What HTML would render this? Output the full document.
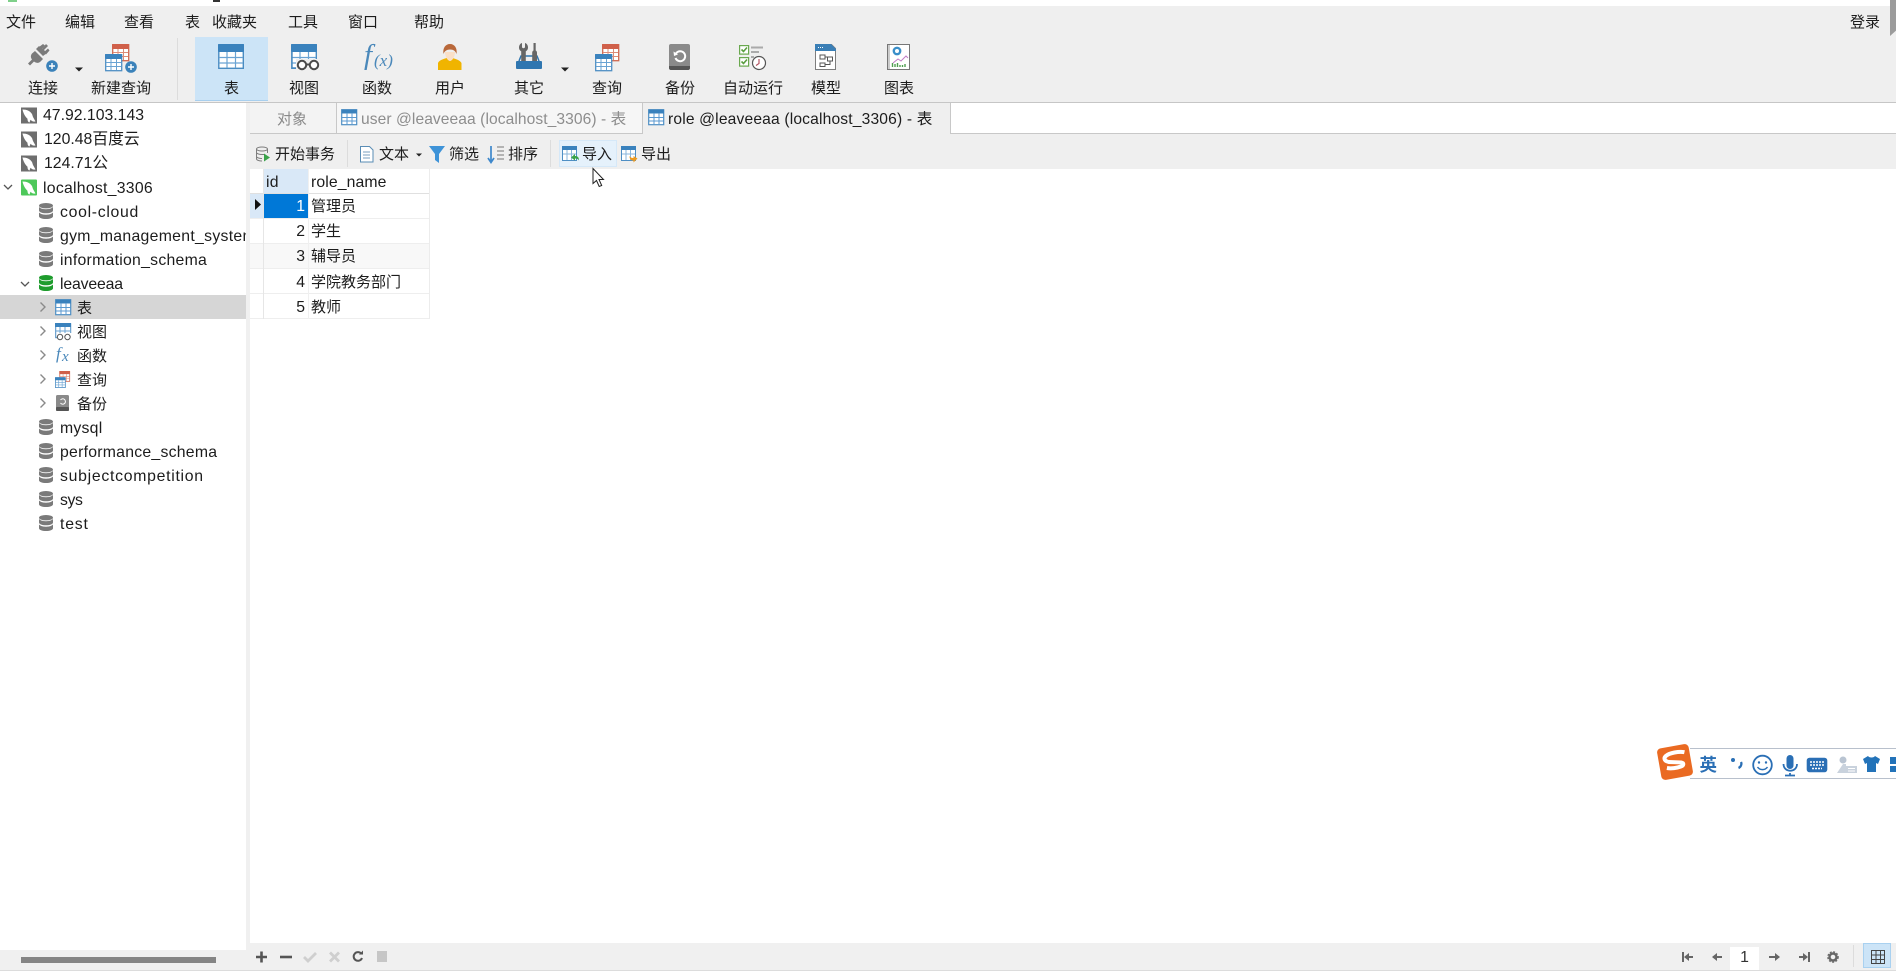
<!DOCTYPE html>
<html><head><meta charset="utf-8"><style>
*{box-sizing:border-box}
html,body{margin:0;padding:0;width:1896px;height:972px;overflow:hidden;background:#fff}
body{position:relative;font-family:"Liberation Sans","Noto Sans CJK SC",sans-serif;color:#1c1c1c}
.b{position:absolute}
.t{position:absolute;white-space:nowrap;line-height:20px;height:20px;font-size:15px;margin-top:1px}
.l{font-size:15.8px}
svg{position:absolute;left:0;top:0}
</style></head><body>
<div class="b" style="left:0;top:0;width:1896px;height:6px;background:#fff"></div>
<div class="b" style="left:8px;top:0;width:9px;height:2px;background:#7fd08a"></div>
<div class="b" style="left:213px;top:0;width:7px;height:2px;background:#333"></div>
<div class="b" style="left:0;top:6px;width:1896px;height:96px;background:#efefef"></div>
<div class="b" style="left:0;top:102px;width:1896px;height:1px;background:#c6c6c6"></div>
<div class="b" style="left:1890px;top:0;width:6px;height:36px;background:#9b9b9b;clip-path:polygon(0 0,100% 0,100% 85%,0 100%)"></div>
<div class="b" style="left:177px;top:38px;width:1px;height:62px;background:#dcdcdc"></div>
<div class="b" style="left:195px;top:37px;width:73px;height:64px;background:#cce4f7;border-bottom:1px solid #a8cfee"></div>

<!-- menu -->
<span class="t" style="left:6px;top:12px">文件</span>
<span class="t" style="left:65px;top:12px">编辑</span>
<span class="t" style="left:124px;top:12px">查看</span>
<span class="t" style="left:185px;top:12px">表</span>
<span class="t" style="left:212px;top:12px">收藏夹</span>
<span class="t" style="left:288px;top:12px">工具</span>
<span class="t" style="left:348px;top:12px">窗口</span>
<span class="t" style="left:414px;top:12px">帮助</span>
<span class="t" style="left:1850px;top:12px">登录</span>

<!-- toolbar labels -->
<span class="t" style="left:28px;top:78px">连接</span>
<span class="t" style="left:91px;top:78px">新建查询</span>
<span class="t" style="left:224px;top:78px">表</span>
<span class="t" style="left:289px;top:78px">视图</span>
<span class="t" style="left:362px;top:78px">函数</span>
<span class="t" style="left:435px;top:78px">用户</span>
<span class="t" style="left:514px;top:78px">其它</span>
<span class="t" style="left:592px;top:78px">查询</span>
<span class="t" style="left:665px;top:78px">备份</span>
<span class="t" style="left:723px;top:78px">自动运行</span>
<span class="t" style="left:811px;top:78px">模型</span>
<span class="t" style="left:884px;top:78px">图表</span>

<!-- sidebar -->
<div class="b" style="left:246px;top:103px;width:4px;height:847px;background:#f0f0f0"></div>
<div class="b" style="left:0;top:295px;width:246px;height:24px;background:#d6d6d6"></div>
<span class="t l" style="left:43px;top:105px">47.92.103.143</span>
<span class="t l" style="left:44px;top:129px">120.48百度云</span>
<span class="t l" style="left:44px;top:153px">124.71公</span>
<span class="t l" style="left:43px;top:178px;letter-spacing:.26px">localhost_3306</span>
<span class="t l" style="left:60px;top:202px;letter-spacing:.7px">cool-cloud</span>
<div class="b" style="left:60px;top:225px;width:186px;height:23px;overflow:hidden"><span class="t l" style="left:0;top:1px;letter-spacing:.3px">gym_management_system</span></div>
<span class="t l" style="left:60px;top:250px;letter-spacing:.27px">information_schema</span>
<span class="t l" style="left:60px;top:274px;letter-spacing:-.15px">leaveeaa</span>
<span class="t" style="left:77px;top:298px">表</span>
<span class="t" style="left:77px;top:322px">视图</span>
<span class="t" style="left:77px;top:346px">函数</span>
<span class="t" style="left:77px;top:370px">查询</span>
<span class="t" style="left:77px;top:394px">备份</span>
<span class="t l" style="left:60px;top:418px;letter-spacing:.24px">mysql</span>
<span class="t l" style="left:60px;top:442px;letter-spacing:.25px">performance_schema</span>
<span class="t l" style="left:60px;top:466px;letter-spacing:.72px">subjectcompetition</span>
<span class="t l" style="left:60px;top:490px;letter-spacing:-.4px">sys</span>
<span class="t l" style="left:60px;top:514px;letter-spacing:.8px">test</span>

<!-- tabs -->
<div class="b" style="left:250px;top:103px;width:87px;height:30px;background:#f3f3f3;border-right:1px solid #c8c8c8"></div>
<div class="b" style="left:337px;top:103px;width:306px;height:30px;background:#f6f6f6;border-right:1px solid #c8c8c8"></div>
<div class="b" style="left:643px;top:103px;width:308px;height:31px;background:#efefef;border-right:1px solid #c8c8c8"></div>
<div class="b" style="left:250px;top:133px;width:393px;height:1px;background:#c8c8c8"></div>
<div class="b" style="left:951px;top:133px;width:945px;height:1px;background:#c8c8c8"></div>
<span class="t" style="left:277px;top:109px;color:#8a8a8a">对象</span>
<span class="t" style="left:361px;top:109px;color:#8d8d8d;font-size:15.6px;letter-spacing:.07px">user @leaveeaa (localhost_3306) - 表</span>
<span class="t" style="left:668px;top:109px;font-size:15.6px;letter-spacing:.17px">role @leaveeaa (localhost_3306) - 表</span>

<!-- toolbar 2 -->
<div class="b" style="left:250px;top:134px;width:1646px;height:35px;background:#efefef"></div>
<div class="b" style="left:347px;top:140px;width:1px;height:27px;background:#dcdcdc"></div>
<div class="b" style="left:550px;top:140px;width:1px;height:27px;background:#dcdcdc"></div>
<div class="b" style="left:559px;top:140px;width:58px;height:27px;background:#e5f1fb;border:1px solid #d5e8f8"></div>
<span class="t" style="left:275px;top:144px">开始事务</span>
<span class="t" style="left:379px;top:144px">文本</span>
<span class="t" style="left:449px;top:144px">筛选</span>
<span class="t" style="left:508px;top:144px">排序</span>
<span class="t" style="left:582px;top:144px">导入</span>
<span class="t" style="left:641px;top:144px">导出</span>

<!-- table -->
<div class="b" style="left:264px;top:169px;width:45px;height:24px;background:#d9e8f7"></div>
<div class="b" style="left:250px;top:193px;width:14px;height:25px;background:#d9e8f7"></div>
<div class="b" style="left:264px;top:193px;width:45px;height:25px;background:#0078d7"></div>
<div class="b" style="left:309px;top:193px;width:120px;height:25px;background:#fff"></div>
<div class="b" style="left:250px;top:243px;width:179px;height:25px;background:#f8f8f8"></div>
<div class="b" style="left:250px;top:193px;width:179px;height:1px;background:#e0e0e0"></div>
<div class="b" style="left:250px;top:218px;width:179px;height:1px;background:#eee"></div>
<div class="b" style="left:250px;top:243px;width:179px;height:1px;background:#eee"></div>
<div class="b" style="left:250px;top:268px;width:179px;height:1px;background:#eee"></div>
<div class="b" style="left:250px;top:293px;width:179px;height:1px;background:#eee"></div>
<div class="b" style="left:250px;top:318px;width:179px;height:1px;background:#eee"></div>
<div class="b" style="left:263px;top:169px;width:1px;height:150px;background:#e6e6e6"></div>
<div class="b" style="left:308px;top:169px;width:1px;height:150px;background:#f0f0f0"></div>
<div class="b" style="left:429px;top:169px;width:1px;height:150px;background:#ececec"></div>
<span class="t l" style="left:266px;top:172px;letter-spacing:.3px">id</span>
<span class="t l" style="left:311px;top:172px;letter-spacing:.1px">role_name</span>
<span class="t l" style="left:264px;width:41px;text-align:right;top:196px;color:#fff">1</span>
<span class="t l" style="left:264px;width:41px;text-align:right;top:221px">2</span>
<span class="t l" style="left:264px;width:41px;text-align:right;top:246px">3</span>
<span class="t l" style="left:264px;width:41px;text-align:right;top:272px">4</span>
<span class="t l" style="left:264px;width:41px;text-align:right;top:297px">5</span>
<span class="t" style="left:311px;top:196px">管理员</span>
<span class="t" style="left:311px;top:221px">学生</span>
<span class="t" style="left:311px;top:246px">辅导员</span>
<span class="t" style="left:311px;top:272px">学院教务部门</span>
<span class="t" style="left:311px;top:297px">教师</span>

<!-- status -->
<div class="b" style="left:250px;top:943px;width:1646px;height:27px;background:#f0f0f0"></div>
<div class="b" style="left:0;top:950px;width:250px;height:20px;background:#f0f0f0"></div>
<div class="b" style="left:21px;top:957px;width:195px;height:6px;background:#858585"></div>
<div class="b" style="left:0;top:970px;width:1896px;height:1px;background:#dcdcdc"></div>
<div class="b" style="left:1730px;top:947px;width:29px;height:23px;background:#fff"></div>
<span class="t l" style="left:1730px;width:29px;text-align:center;top:947px;color:#333">1</span>
<div class="b" style="left:1853px;top:945px;width:1px;height:22px;background:#dcdcdc"></div>
<div class="b" style="left:1863px;top:943px;width:28px;height:25px;background:#cce4f7;border:1px solid #a9d1f0"></div>

<!-- sogou -->
<div class="b" style="left:1690px;top:748px;width:206px;height:31px;background:#fff;border-top:1px solid #b8c0cc;border-bottom:1px solid #b8c0cc"></div>
<span class="t" style="left:1699.500px;top:754px;font-size:17.500px;font-weight:bold;color:#2a6fb5">英</span>

<svg width="1896" height="972" viewBox="0 0 1896 972">
<defs>
<g id="tb"><rect x=".7" y=".7" width="15" height="15" fill="#fff" stroke="#4f8fc4" stroke-width="1.2"/><rect x=".5" y=".5" width="15.400" height="4" fill="#3a82bd"/><path d="M1 8.500h14.500M1 12h14.500M6 4v11M11 4v11" stroke="#5b9ad0" fill="none"/></g>
<g id="dol"><path d="M1.500 2c4.500 0 7.500 1.500 9.500 4.500l1 3 2.500 4.500c-2.300.3-3.800-.4-5-1.800L8.500 15c-1.800-.7-2-2.400-2-3.800C4.500 9.500 2.300 6 1.500 2z" fill="#fff"/></g>
<g id="srv"><rect width="16" height="16" fill="#6e6e6e"/><use href="#dol"/></g>
<g id="srvg"><rect width="16" height="16" rx="1" fill="#4dc85a"/><use href="#dol"/></g>
<g id="db"><ellipse cx="7" cy="2.700" rx="7" ry="2.700"/><path d="M0 4c1.500 1.600 4 2.200 7 2.200S12.500 5.600 14 4v3.500c0 1.600-3.200 2.800-7 2.800S0 9.100 0 7.500zM0 9.500c1.500 1.600 4 2.200 7 2.200s5.500-.6 7-2.200v3.700C14 14.800 10.800 16 7 16s-7-1.200-7-2.800z"/></g>
<g id="rt"><path d="M.5.5l4.500 4.500-4.500 4.500" fill="none" stroke="#8a8a8a" stroke-width="1.400"/></g>
<g id="bigt"><rect x=".8" y=".8" width="24.500" height="23.500" fill="#fff" stroke="#4a8cc2" stroke-width="1.400"/><rect x="0" y="0" width="26" height="8" rx="1" fill="#3a82bd"/><path d="M1 13.500h24M1 19h24M9 8v16M17.500 8v16" stroke="#6aa3d3" stroke-width="1.200" fill="none"/></g>
<g id="qr"><rect x="7.700" y=".7" width="16" height="16" fill="#fff" stroke="#d0684f" stroke-width="1.300"/><rect x="7" y="0" width="17" height="5" rx="1" fill="#d0604a"/><path d="M8 8.500h15M8 12.500h15M13 5v11M18.500 5v11" stroke="#dc8c78" fill="none"/><rect x=".7" y="10.700" width="16" height="16" fill="#fff" stroke="#4f8fc4" stroke-width="1.300"/><rect x="0" y="10" width="17" height="5" rx="1" fill="#3a82bd"/><path d="M1 18.500h15M1 22.500h15M6 15v11M11.500 15v11" stroke="#6aa3d3" fill="none"/></g>
<g id="plus"><circle r="5.800" fill="#3b82ba"/><path d="M-3 0h6M0-3v6" stroke="#fff" stroke-width="1.400"/></g>
</defs>

<!-- plug -->
<g fill="#7b7b7b">
<path d="M46 44l2 2-4 4 3 3-4 3-7-7 3-3 3 3z"/>
<path d="M35 51l8 8-3 3c-2 1.500-4 1-6-.500l-4 4-2-2 4-4c-1.500-2-1.500-4 0-6z"/>
<path d="M39 47l4-3 2 1.500-3.500 4zM44 52l4-3.500 1.500 2-3.500 4z"/>
</g>
<use href="#plus" x="52" y="66"/>
<path d="M75 67.500h8l-4 4z" fill="#222"/>
<use href="#qr" x="105" y="44"/>
<use href="#plus" x="131" y="67"/>
<use href="#bigt" x="218" y="44"/>
<!-- view -->
<g><rect x="291.800" y="44.800" width="24.500" height="23.500" fill="#fff" stroke="#4a8cc2" stroke-width="1.400"/><rect x="291" y="44" width="26" height="8" rx="1" fill="#3a82bd"/><path d="M292 57.500h24M292 63h24M300 52v16M308.500 52v16" stroke="#6aa3d3" stroke-width="1.200" fill="none"/>
<rect x="296" y="59" width="24" height="11" fill="#efefef"/><circle cx="302" cy="65" r="4.200" fill="#fff" stroke="#4a4a4a" stroke-width="2"/><circle cx="314" cy="65" r="4.200" fill="#fff" stroke="#4a4a4a" stroke-width="2"/><path d="M306 64.500h4" stroke="#4a4a4a" stroke-width="2"/><path d="M292 52v16h4" stroke="#4a8cc2" fill="none" stroke-width="1.400"/></g>
<!-- fx -->
<text x="364" y="64" font-family="Liberation Serif" font-style="italic" font-size="29" fill="#4a88ba">f</text>
<text x="374" y="66" font-family="Liberation Serif" font-style="italic" font-size="17" fill="#4a88ba">(x)</text>
<!-- user -->
<path d="M438 70v-7c1-3 6-4 8.500-5h6c3 1 7.500 2 9 5v7z" fill="#f0b400"/>
<path d="M445 52c0 5 3 9 5 9s5-4 5-9z" fill="#fae0c8"/>
<path d="M443.500 54c-1-6 2-10 6.500-10s7.500 4 6.500 10c-1-3-3-4.500-6.500-4.500-3 0-5.500 1.500-6.500 4.500z" fill="#b9683a"/>
<!-- tools -->
<path d="M519 61l2-5h16l2 5" fill="none" stroke="#2f76b0" stroke-width="1.500"/>
<rect x="516" y="61" width="26" height="8" rx="1" fill="#2f76b0"/>
<path d="M522 43v4c0 .8.800 1.200 1.500 1.200s1.500-.4 1.500-1.200v-4c2 .6 3 2.500 3 4.500s-1.200 3.300-2.200 3.800V61h-4.600v-9.700c-1-.5-2.200-1.800-2.200-3.800s1-3.900 3-4.500z" fill="#666"/>
<path d="M533.500 43h2.200v7.500c1 .4 1.300 1.300 1.300 2.500V61h-4.800v-8c0-1.200.3-2.100 1.300-2.500z" fill="#666"/>
<path d="M561 67.500h8l-4 4z" fill="#222"/>
<use href="#qr" x="595" y="44"/>
<!-- backup -->
<rect x="669" y="44" width="21" height="26" rx="2" fill="#8a8a8a"/>
<path d="M669 66h21v2c0 1-1 2-2 2h-17c-1 0-2-1-2-2z" fill="#555"/>
<path d="M676 53.500a5 5 0 1 1-.5 4.500" fill="none" stroke="#fff" stroke-width="2"/><path d="M673.500 51.500l.5 4.500 4-1.500z" fill="#fff"/>
<!-- auto run -->
<g fill="none"><rect x="739.600" y="45.600" width="9" height="8.500" stroke="#6aa84f" stroke-width="1.200" fill="#fff"/><path d="M741.500 49.500l2 2 3.500-4" stroke="#5a9e3f" stroke-width="1.600"/>
<rect x="739.600" y="57.600" width="9" height="8.500" stroke="#6aa84f" stroke-width="1.200" fill="#fff"/><path d="M741.500 61.500l2 2 3.500-4" stroke="#5a9e3f" stroke-width="1.600"/>
<path d="M751 47.500h12M751 52h8M751 57h3" stroke="#aaa" stroke-width="2"/>
<circle cx="759" cy="63" r="6.500" fill="#fff" stroke="#555" stroke-width="1.200"/><path d="M759 59v4.500l-3 2" stroke="#b04a5a" stroke-width="1.100"/></g>
<!-- model -->
<path d="M815.500 44.500h16l4 4v21h-20z" fill="#fff" stroke="#7d7d7d"/><path d="M815 44h16l5 5v2h-21z" fill="#3a7fb6"/><path d="M818 47.500h1M820 47.500h1M822 47.500h1" stroke="#fff"/>
<path d="M820 55h5v4h-5zM827.500 57h5v4h-5zM820 63h5v3.500h-5zM825 57h2.500M830 61v3.500h-5" fill="none" stroke="#555"/>
<!-- chart -->
<rect x="887.500" y="44.500" width="22" height="25" fill="#fff" stroke="#777"/><path d="M889 45v24" stroke="#999"/>
<circle cx="897" cy="51" r="3.200" fill="none" stroke="#3a8fc9" stroke-width="2.400"/>
<path d="M893 63l5-4 3 2 5-5 2 2" fill="none" stroke="#c07bc5"/>
<path d="M892.500 67v-4M895 67v-3M897.500 67v-4M900 67v-2M902.500 67v-2M905 67v-3" stroke="#4f9e4f" stroke-width="1.400"/>

<!-- tab icons -->
<use href="#tb" x="341" y="109"/>
<use href="#tb" x="648" y="109"/>

<!-- tree icons -->
<use href="#srv" x="21" y="107.500"/>
<use href="#srv" x="21" y="131.500"/>
<use href="#srv" x="21" y="155.500"/>
<use href="#srvg" x="21" y="179.500"/>
<path d="M4 185l4 4 4-4" fill="none" stroke="#555" stroke-width="1.300"/>
<path d="M21 282l4 4 4-4" fill="none" stroke="#555" stroke-width="1.300"/>
<g fill="#7a7a7a">
<use href="#db" x="39" y="203"/><use href="#db" x="39" y="227"/><use href="#db" x="39" y="251"/>
<use href="#db" x="39" y="419"/><use href="#db" x="39" y="443"/><use href="#db" x="39" y="467"/><use href="#db" x="39" y="491"/><use href="#db" x="39" y="515"/>
</g>
<g fill="#1e9c2d"><use href="#db" x="39" y="275"/></g>
<use href="#rt" x="40" y="302"/><use href="#rt" x="40" y="326"/><use href="#rt" x="40" y="350"/><use href="#rt" x="40" y="374"/><use href="#rt" x="40" y="398"/>
<use href="#tb" x="55" y="299"/>
<g><rect x="55.700" y="323.700" width="15" height="14" fill="#fff" stroke="#4f8fc4"/><rect x="55" y="323" width="16" height="4" fill="#3a82bd"/><path d="M56 331h14M60 327v9M65 327v9" stroke="#6aa3d3" fill="none"/><rect x="58" y="333" width="14" height="7" fill="#fff"/><circle cx="60" cy="337" r="2.700" fill="#fff" stroke="#555"/><circle cx="67.500" cy="337" r="2.700" fill="#fff" stroke="#555"/></g>
<text x="56" y="359" font-family="Liberation Serif" font-style="italic" font-size="17" fill="#4a88ba">f</text>
<text x="62" y="361" font-family="Liberation Serif" font-style="italic" font-size="15" fill="#4a88ba">x</text>
<g transform="translate(55,371) scale(.62)"><use href="#qr"/></g>
<rect x="56" y="395" width="13" height="16" rx="1.500" fill="#8a8a8a"/><rect x="56" y="407" width="13" height="4" rx="1" fill="#555"/><path d="M60.500 400a2.700 2.700 0 1 1 0 3" fill="none" stroke="#fff"/>

<!-- toolbar2 icons -->
<g fill="none" stroke="#7d7d7d"><ellipse cx="262" cy="149" rx="5.500" ry="2"/><path d="M256.500 149v10c0 1 2.500 2 5.500 2M256.500 152.500c0 1 2.500 2 5.500 2h3M256.500 156.500c0 1 2.500 2 5.500 2M267.500 149v4"/></g>
<path d="M264 153.500l6 4-6 4z" fill="#3aa34a"/>
<path d="M360.500 146.500h9l3.500 3.500v12h-12.500z" fill="#fff" stroke="#5a8db5"/><path d="M363 152h7M363 155h7M363 158h7" stroke="#7a9fbf"/>
<path d="M416 153.500h6l-3 3z" fill="#222"/>
<path d="M429 146h16l-6 8v9l-4-3v-6z" fill="#3e93d8"/>
<path d="M491 146v15M488 158l3 4.500 3-4.500" fill="none" stroke="#3e88cc" stroke-width="1.700"/><path d="M497 147h7M497 151h7M497 155h7M497 159h7" stroke="#777"/>
<g transform="translate(0,-1)">
<rect x="562.500" y="147.500" width="14" height="14" fill="#fff" stroke="#4f8fc4"/><rect x="562" y="147" width="15" height="4" fill="#3a82bd"/><path d="M563 155h13M567 151v10M571.500 151v10" stroke="#8ab6db"/>
<path d="M571 158.500l4-3.500v2c2.500 0 4 1 4 4.500-1-1.500-2-2-4-2v2z" fill="#3aa34a"/>
<rect x="621.500" y="147.500" width="14" height="14" fill="#fff" stroke="#4f8fc4"/><rect x="621" y="147" width="15" height="4" fill="#3a82bd"/><path d="M622 155h13M626 151v10M630.500 151v10" stroke="#8ab6db"/>
<path d="M637.500 159.500l-4 4v-2c-2.500 0-4-1-4-4.500 1 1.500 2 2 4 2v-2z" fill="#ee9a1e"/>
</g>

<!-- cursor -->
<path d="M593 168.500v15l3.500-3 2.700 6 2.500-1-2.700-6h4.500z" fill="#fff" stroke="#222"/>

<!-- row marker -->
<path d="M255 199v11l6-5.500z" fill="#111"/>

<!-- sogou logo -->
<g transform="rotate(-10 1675 762)"><rect x="1659" y="746" width="32" height="32" rx="4" fill="#ea6a22"/><path d="M1686 754c-5-2-15-2-19 .5-3 2-2 5 2 6.500l12 2.500c3 1 2 3.500-1 4-4 .8-10 .5-14-1" fill="none" stroke="#fff" stroke-width="4"/></g>
<!-- sogou items -->
<circle cx="1733" cy="760" r="2" fill="#2a6fb5"/><path d="M1741 762c1 2 0 5-2.500 6" fill="none" stroke="#2a6fb5" stroke-width="2.300"/>
<circle cx="1762.500" cy="765" r="9.300" fill="#fff" stroke="#2a6fb5" stroke-width="1.800"/><circle cx="1759" cy="762.500" r="1.200" fill="#2a6fb5"/><circle cx="1766" cy="762.500" r="1.200" fill="#2a6fb5"/><path d="M1757.500 767c2.500 3.500 7.500 3.500 10 0" fill="none" stroke="#2a6fb5" stroke-width="1.500"/>
<rect x="1786.500" y="755" width="7" height="14" rx="3.500" fill="#2a6fb5"/><path d="M1783.500 764c0 9 13.500 9 13.500 0M1790 773v2.500M1785 775.500h10" fill="none" stroke="#2a6fb5" stroke-width="1.800"/>
<rect x="1807.500" y="758.500" width="19" height="13" rx="2" fill="#2a6fb5" stroke="#2a6fb5" stroke-width="1.600"/><path d="M1810 762h14M1810 765h14M1812 768.500h10" stroke="#fff" stroke-width="1.500" stroke-dasharray="2 1"/>
<circle cx="1843" cy="760" r="3.500" fill="#b9c4d2"/><path d="M1837 773l6-9h3v9zM1846 766h11v7h-11z" fill="#c9d2dd"/><path d="M1848 768.500h7M1848 771h7" stroke="#fff"/>
<path d="M1868 756l-5 3 2 5 2-1v9h9v-9l2 1 2-5-5-3c-1 2-6 2-7 0z" fill="#2373b9"/>
<path d="M1890 757h6v7h-6zM1890 766h6v6h-6z" fill="#2373b9"/>

<!-- status icons left -->
<path d="M256 957h11M261.500 951.500v11" stroke="#555" stroke-width="2.600"/>
<path d="M280 957h12" stroke="#555" stroke-width="2.600"/>
<path d="M304 957l4 4 8-8" fill="none" stroke="#cfcfcf" stroke-width="2.800"/>
<path d="M330 952.500l9 9M339 952.500l-9 9" stroke="#cfcfcf" stroke-width="2.800"/>
<path d="M361.500 954a4.300 4.300 0 1 0 .5 4" fill="none" stroke="#555" stroke-width="2"/><path d="M359 954.500h4v-4z" fill="#555"/>
<rect x="377" y="951" width="10" height="11" fill="#c6c6c6"/>

<!-- status icons right -->
<g stroke="#666" stroke-width="2" fill="none"><path d="M1683 952v10M1686 957h7"/><path d="M1713 957h9"/><path d="M1769 957h9"/><path d="M1799 957h7M1809 952v10"/></g>
<g fill="#666"><path d="M1684 957l5-4v8zM1712 957l5-4v8zM1780 957l-5-4v8zM1808 957l-5-4v8z"/></g>
<circle cx="1833" cy="957" r="3.500" fill="none" stroke="#666" stroke-width="2.400"/><circle cx="1833" cy="957" r="5.200" fill="none" stroke="#666" stroke-width="1.200" stroke-dasharray="2 1.500"/>
<rect x="1871.500" y="950.500" width="13" height="13" fill="none" stroke="#444"/><path d="M1871 955h14M1871 959.500h14M1876 950v14M1880.500 950v14" stroke="#444"/>
</svg>
</body></html>
